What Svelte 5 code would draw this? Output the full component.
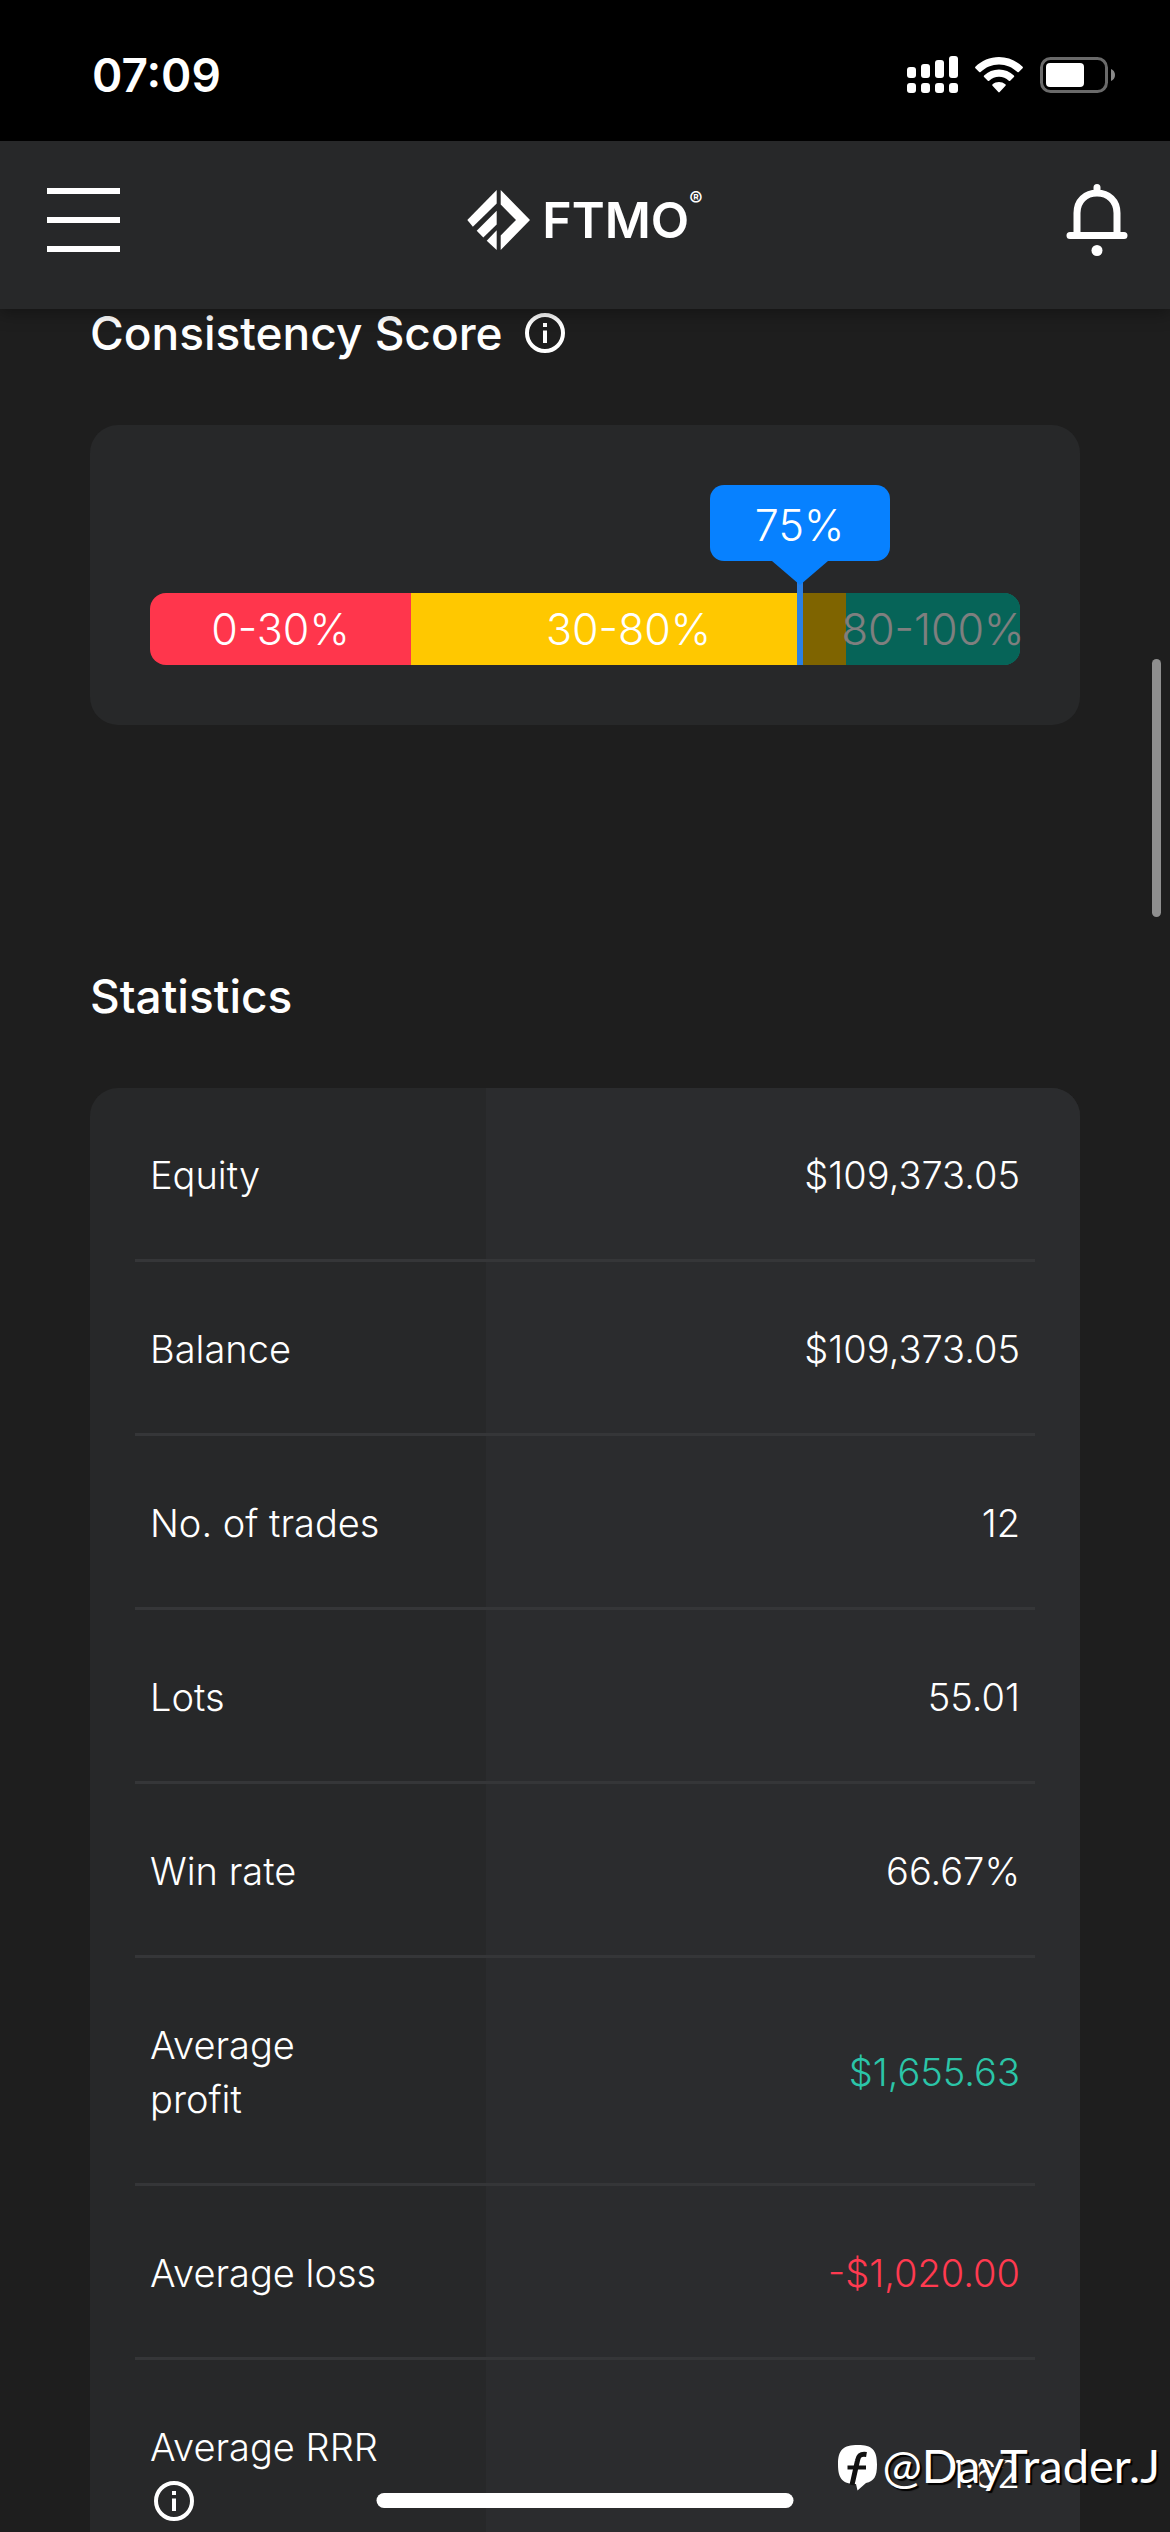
<script lang="ts">
    interface Stat {
        label: string;
        value: string;
        tone?: "profit" | "loss";
        info?: boolean;
    }

    const score = 75;

    const ranges = [
        { label: "0-30%", size: 30, tone: "low" },
        { label: "30-80%", size: 50, tone: "mid" },
        { label: "80-100%", size: 20, tone: "high" },
    ];

    const stats: Stat[] = [
        { label: "Equity", value: "$109,373.05" },
        { label: "Balance", value: "$109,373.05" },
        { label: "No. of trades", value: "12" },
        { label: "Lots", value: "55.01" },
        { label: "Win rate", value: "66.67%" },
        { label: "Average profit", value: "$1,655.63", tone: "profit" },
        { label: "Average loss", value: "-$1,020.00", tone: "loss" },
        { label: "Average RRR", value: "1.62", info: true },
    ];
</script>

{#snippet infoIcon()}
    <svg viewBox="0 0 40 40" width="40" height="40" fill="none" aria-hidden="true">
        <circle cx="20" cy="20" r="18" stroke="currentColor" stroke-width="4" />
        <path d="M18 10h4v4h-4zM18 17.5h4V30h-4z" fill="currentColor" />
    </svg>
{/snippet}

<div class="screen">
    <div class="status-bar">
        <time>07:09</time>
        <div class="status-icons">
            <svg viewBox="0 0 51 37" width="51" height="37" fill="currentColor" aria-hidden="true">
                <rect x="0" y="11" width="9" height="11" rx="3" />
                <rect x="14" y="8" width="9" height="14" rx="3" />
                <rect x="28" y="4" width="9" height="18" rx="3" />
                <rect x="42" y="0" width="9" height="22" rx="3" />
                <rect x="0" y="27" width="9" height="10" rx="3" />
                <rect x="14" y="27" width="9" height="10" rx="3" />
                <rect x="28" y="27" width="9" height="10" rx="3" />
                <rect x="42" y="27" width="9" height="10" rx="3" />
            </svg>
            <svg viewBox="0 0 48 36" width="48" height="36" fill="currentColor" aria-hidden="true">
                <path d="M24 0C15 0 6.500 3.600.4 9.800a1 1 0 0 0 0 1.400L4.200 15a1 1 0 0 0 1.400 0C10.500 10.200 17 7.400 24 7.400s13.500 2.800 18.400 7.600a1 1 0 0 0 1.400 0l3.800-3.800a1 1 0 0 0 0-1.400C41.500 3.600 33 0 24 0z" />
                <path d="M24 12.600c-5.700 0-10.900 2.200-14.900 5.900a1 1 0 0 0 0 1.500l3.700 3.700a1 1 0 0 0 1.400 0 14.200 14.200 0 0 1 19.600 0 1 1 0 0 0 1.400 0l3.700-3.700a1 1 0 0 0 0-1.500c-4-3.700-9.200-5.900-14.900-5.900z" />
                <path d="M24 25c-2.400 0-4.600.8-6.400 2.200a1 1 0 0 0-.1 1.500l5.800 6.400a1 1 0 0 0 1.400 0l5.800-6.400a1 1 0 0 0-.1-1.500A10.400 10.400 0 0 0 24 25z" />
            </svg>
            <svg viewBox="0 0 75 36" width="75" height="36" aria-hidden="true">
                <rect x="1.500" y="1.500" width="65" height="33" rx="9" fill="none" stroke="#6a6a6a" stroke-width="3" />
                <rect x="6" y="6" width="38" height="24" rx="4" fill="currentColor" />
                <path d="M71 12c2.500 1 4 3.300 4 6s-1.500 5-4 6z" fill="#8a8a8a" />
            </svg>
        </div>
    </div>

    <header>
        <button class="icon-button" aria-label="Open menu">
            <svg viewBox="0 0 73 64" width="73" height="64" fill="currentColor" aria-hidden="true">
                <rect y="0" width="73" height="6" />
                <rect y="29" width="73" height="6" />
                <rect y="58" width="73" height="6" />
            </svg>
        </button>
        <a class="brand" href="/" aria-label="FTMO home">
            <svg viewBox="0 0 63 60" width="63" height="60" fill="currentColor" aria-hidden="true">
                <path d="M33.700 0 63 30 33.700 60V45.500L49 30 33.700 14.500z" />
                <path d="M29.700 0 .3 30l5.600 6.700L29.700 13.500z" />
                <path d="M29.700 20.700 9.700 40.700l6.600 6.800 13.400-13z" />
                <path d="M29.700 40.300 19.700 50.700l10 9.300z" />
            </svg>
            <span class="brand-name">FTMO</span><span class="brand-mark">®</span>
        </a>
        <button class="icon-button bell" aria-label="Notifications">
            <svg viewBox="0 0 62 72" width="62" height="72" fill="none" stroke="currentColor" stroke-width="7" stroke-linecap="round" aria-hidden="true">
                <path d="M11 51V29C11 17 19.500 9 31 9s20 8 20 20v22M4 51.500h54M31 3.500V9" />
                <circle cx="31" cy="66.500" r="5.500" fill="currentColor" stroke="none" />
            </svg>
        </button>
    </header>

    <main>
        <section>
            <h2>Consistency Score {@render infoIcon()}</h2>
            <div class="card score-card">
                <div class="gauge">
                    <div class="bar">
                        {#each ranges as range}
                            <div class="range {range.tone}" style="width: {range.size}%">
                                <span>{range.label}</span>
                            </div>
                        {/each}
                        <div class="remaining" style="width: {100 - score}%"></div>
                    </div>
                    <div class="marker" style="left: {score}%">
                        <div class="tooltip">{score}%</div>
                    </div>
                </div>
            </div>
        </section>

        <section>
            <h2>Statistics</h2>
            <table class="card">
                <tbody>
                    {#each stats as stat}
                        <tr>
                            <th scope="row">
                                {stat.label}
                                {#if stat.info}{@render infoIcon()}{/if}
                            </th>
                            <td class={stat.tone}>{stat.value}</td>
                        </tr>
                    {/each}
                </tbody>
            </table>
        </section>
    </main>

    <div class="scroll-thumb"></div>
    <div class="home-indicator"></div>

    <div class="watermark">
        <svg viewBox="0 0 40 47" width="40" height="47" aria-hidden="true">
            <path d="M20 0C34 0 39 5 39 19.500 39 32 36 36 28 38L19.500 45.500 18 39C5 39 0 34 0 19.500S5 0 20 0z" fill="#fff" />
            <path d="M28.500 9.500c-6-1-8 1-9 6L14 40" fill="none" stroke="#111" stroke-width="5" />
            <path d="M9.500 22.500H28" fill="none" stroke="#111" stroke-width="4" />
        </svg>
        <span>@DayTrader.J</span>
    </div>
</div>

<style>
    :global(body) {
        margin: 0;
        background: #1e1e1e;
    }

    .screen {
        position: relative;
        height: 100vh;
        overflow: hidden;
        background: #1e1e1e;
        color: #fff;
        font-family: Inter, "Open Sans", sans-serif;
    }

    svg {
        display: block;
        flex: none;
    }

    .status-bar {
        display: flex;
        align-items: center;
        justify-content: space-between;
        box-sizing: border-box;
        height: 141px;
        padding: 8px 55px 0 92px;
        background: #000;
    }

    time {
        font-size: 46px;
        font-weight: 600;
    }

    .status-icons {
        display: flex;
        align-items: center;
        gap: 17px;
    }

    header {
        position: relative;
        z-index: 1;
        display: grid;
        grid-template-columns: 1fr auto 1fr;
        align-items: center;
        box-sizing: border-box;
        height: 168px;
        padding: 0 42px 10px;
        background: #272829;
        box-shadow: 0 4px 16px rgba(0, 0, 0, 0.35);
    }

    .icon-button {
        justify-self: start;
        padding: 0 0 0 5px;
        border: 0;
        background: none;
        color: inherit;
        cursor: pointer;
    }

    .bell {
        justify-self: end;
    }

    .brand {
        display: flex;
        align-items: center;
        color: inherit;
        text-decoration: none;
    }

    .brand-name {
        margin-left: 12px;
        font-size: 50px;
        font-weight: 600;
        line-height: 60px;
    }

    .brand-mark {
        align-self: flex-start;
        font-size: 20px;
        font-weight: 600;
        line-height: 18px;
    }

    main {
        padding: 0 90px;
    }

    section {
        margin-bottom: 247px;
    }

    h2 {
        display: flex;
        align-items: center;
        gap: 22px;
        margin: 0 0 68px;
        font-size: 46px;
        font-weight: 500;
        line-height: 48px;
    }

    .card {
        border-radius: 28px;
        background: #272829;
    }

    .score-card {
        padding: 60px;
    }

    .gauge {
        position: relative;
        padding-top: 108px;
        font-size: 43px;
        font-weight: 300;
    }

    .bar {
        position: relative;
        display: flex;
        height: 72px;
    }

    .range {
        display: flex;
        align-items: center;
        justify-content: center;
        line-height: 72px;
        white-space: nowrap;
    }

    .low {
        border-radius: 16px 0 0 16px;
        background: #ff364c;
    }

    .mid {
        background: #ffc800;
    }

    .high {
        border-radius: 0 16px 16px 0;
        background: #0cc8b0;
    }

    /* Dims the part of the scale above the current score */
    .remaining {
        position: absolute;
        top: 0;
        right: 0;
        bottom: 0;
        border-radius: 0 16px 16px 0;
        background: rgba(0, 0, 0, 0.5);
    }

    .marker {
        position: absolute;
        top: 0;
        bottom: 0;
        display: flex;
        justify-content: center;
        width: 6px;
        margin-left: -6px;
        background: #2a80e6;
    }

    .tooltip {
        position: relative;
        flex: none;
        width: 180px;
        height: 76px;
        border-radius: 14px;
        background: #0781ff;
        line-height: 80px;
        text-align: center;
    }

    .tooltip::after {
        content: "";
        position: absolute;
        top: 100%;
        left: 50%;
        border: solid transparent;
        border-width: 24px 28px 0;
        border-top-color: #0781ff;
        transform: translateX(-50%);
    }

    table {
        width: 100%;
        border-spacing: 0;
        overflow: hidden;
        font-size: 38px;
        line-height: 54px;
    }

    th,
    td {
        padding: 60px;
        font-weight: 300;
        background-image: linear-gradient(#353638, #353638);
        background-size: calc(100% - 45px) 3px;
        background-repeat: no-repeat;
    }

    th {
        box-sizing: border-box;
        width: 40%;
        padding-right: 90px;
        background-position: right bottom;
        text-align: left;
    }

    th svg {
        margin: 7px 0 7px 4px;
    }

    td {
        background-color: #2b2c2e;
        background-position: left bottom;
        text-align: right;
    }

    tr:last-child > * {
        background-image: none;
    }

    .profit {
        color: #2bc5a8;
    }

    .loss {
        color: #ff3a50;
    }

    .scroll-thumb {
        position: absolute;
        top: 659px;
        right: 9px;
        width: 9px;
        height: 258px;
        border-radius: 5px;
        background: #8f8f8f;
    }

    .home-indicator {
        position: absolute;
        bottom: 24px;
        left: 50%;
        width: 417px;
        height: 15px;
        border-radius: 8px;
        background: #fff;
        transform: translateX(-50%);
    }

    .watermark {
        position: absolute;
        right: 10px;
        bottom: 40px;
        display: flex;
        align-items: flex-end;
        gap: 4px;
        font-family: Lato, "Open Sans", sans-serif;
        font-size: 47px;
        font-weight: 400;
        line-height: 54px;
        text-shadow: 2px 2px 1px #000;
    }
</style>
